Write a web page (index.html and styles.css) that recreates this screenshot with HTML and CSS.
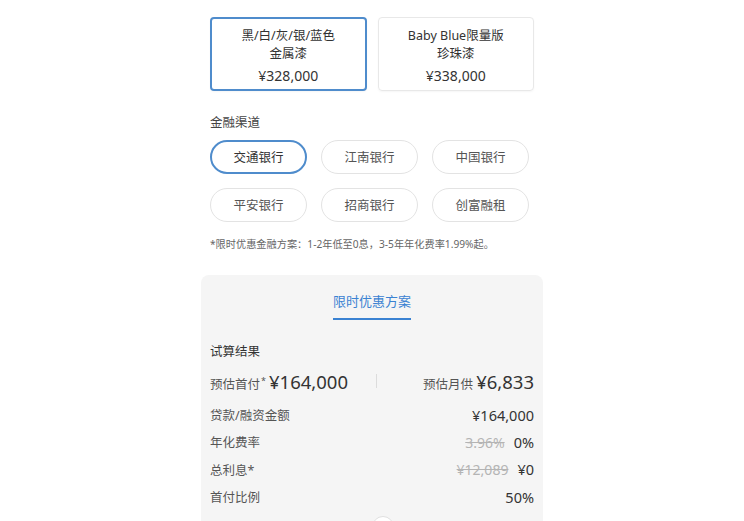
FILE: index.html
```html
<!DOCTYPE html>
<html lang="zh">
<head>
<meta charset="utf-8">
<link rel="stylesheet" href="styles.css">
</head>
<body>
<div class="page">
  <div class="cards">
    <div class="card selected">
      <div class="card-name">黑/白/灰/银/蓝色<br>金属漆</div>
      <div class="card-price">¥328,000</div>
    </div>
    <div class="card">
      <div class="card-name">Baby Blue限量版<br>珍珠漆</div>
      <div class="card-price">¥338,000</div>
    </div>
  </div>

  <div class="section-title">金融渠道</div>
  <div class="pills">
    <div class="pill selected">交通银行</div>
    <div class="pill">江南银行</div>
    <div class="pill">中国银行</div>
    <div class="pill">平安银行</div>
    <div class="pill">招商银行</div>
    <div class="pill">创富融租</div>
  </div>
  <div class="note">*限时优惠金融方案：1-2年低至0息，3-5年年化费率1.99%起。</div>
</div>

<div class="panel">
  <div class="tabs"><div class="tab">限时优惠方案</div></div>
  <div class="result-title">试算结果</div>
  <div class="summary">
    <div class="sum-item"><span class="sum-label">预估首付<sup>*</sup></span><span class="sum-value">¥164,000</span></div>
    <div class="sum-divider"></div>
    <div class="sum-item sum-right"><span class="sum-label">预估月供</span><span class="sum-value">¥6,833</span></div>
  </div>
  <div class="rows">
    <div class="row"><span class="row-label">贷款/融资金额</span><span class="row-value">¥164,000</span></div>
    <div class="row"><span class="row-label">年化费率</span><span class="row-value"><s>3.96%</s>0%</span></div>
    <div class="row"><span class="row-label">总利息*</span><span class="row-value"><s>¥12,089</s>¥0</span></div>
    <div class="row"><span class="row-label">首付比例</span><span class="row-value">50%</span></div>
  </div>
  <div class="knob"></div>
</div>
</body>
</html>
```

FILE: styles.css
```css
* { box-sizing: border-box; }
html, body { margin: 0; padding: 0; background: #fff; }
body {
  font-family: "Noto Sans", "Noto Sans CJK SC", sans-serif;
  color: #333;
  overflow: hidden;
  height: 521px;
}
.page {
  width: 324px;
  margin: 0 auto;
  padding-top: 17px;
}
.cards {
  display: grid;
  grid-template-columns: 1fr 1fr;
  column-gap: 11px;
}
.card {
  height: 74px;
  border: 1px solid #e8e8e8;
  border-radius: 4px;
  text-align: center;
  padding-top: 9px;
  box-shadow: 0 1px 2px rgba(0,0,0,0.04);
}
.card.selected {
  border: 2px solid #4f8ccc;
  padding-top: 8px;
}
.card-name {
  font-size: 12.5px;
  line-height: 18px;
  color: #333;
}
.card-price {
  font-size: 14px;
  line-height: 20px;
  margin-top: 3px;
  color: #333;
}
.section-title {
  font-size: 12.5px;
  line-height: 18px;
  margin-top: 23px;
  color: #444;
}
.pills {
  display: grid;
  grid-template-columns: repeat(3, 97px);
  column-gap: 14px;
  row-gap: 14px;
  margin-top: 8px;
}
.pill {
  height: 34px;
  border: 1px solid #e3e3e3;
  border-radius: 17px;
  display: flex;
  align-items: center;
  justify-content: center;
  font-size: 12.5px;
  color: #555;
  padding-bottom: 1px;
}
.pill.selected {
  border: 2px solid #4f8ccc;
  color: #333;
}
.note {
  font-size: 10.2px;
  line-height: 14px;
  color: #666;
  margin-top: 15px;
}
.panel {
  position: relative;
  width: 342px;
  height: 260px;
  margin: 24px auto 0;
  background: #f5f5f5;
  border-radius: 8px 8px 0 0;
  padding: 0 9px;
}
.tabs {
  display: flex;
  justify-content: center;
  padding-top: 16px;
}
.tab {
  font-size: 13px;
  line-height: 20px;
  color: #3a82d2;
  padding: 0 0 7px;
  width: 78px;
  text-align: center;
  border-bottom: 2px solid #3a82d2;
}
.result-title {
  font-size: 12.5px;
  line-height: 18px;
  color: #333;
  margin-top: 23px;
}
.summary {
  display: flex;
  align-items: center;
  margin-top: 6px;
  height: 28px;
}
.sum-item { display: flex; align-items: baseline; }
.sum-right { margin-left: auto; }
.sum-label { font-size: 12.5px; color: #555; }
.sum-label sup { font-size: 9px; vertical-align: 5px; margin-left: 1px; }
.sum-value { font-size: 18.5px; color: #333; margin-left: 3px; }
.sum-divider {
  width: 1px;
  height: 14px;
  background: #dcdcdc;
  margin-left: 28px;
}
.rows { margin-top: 6px; }
.row {
  display: flex;
  justify-content: space-between;
  align-items: center;
  height: 27.3px;
}
.row-label { font-size: 12.5px; color: #555; }
.row-value { font-size: 14.5px; color: #333; }
.row-value s {
  color: #b4b4b4;
  font-size: 14px;
  margin-right: 9px;
}
.knob {
  position: absolute;
  left: 50%;
  top: 241px;
  width: 22px;
  height: 22px;
  margin-left: 0;
  border-radius: 50%;
  background: #fff;
  border: 1px solid #e0e0e0;
}
```
